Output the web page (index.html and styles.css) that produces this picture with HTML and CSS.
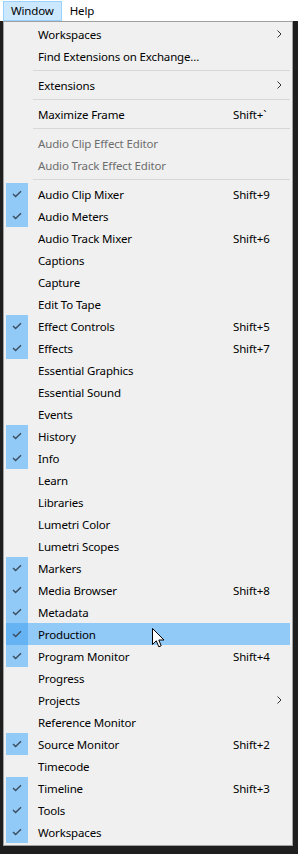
FILE: index.html
```html
<!DOCTYPE html>
<html lang="en">
<head>
    <meta charset="UTF-8">
    <meta name="viewport" content="width=device-width, initial-scale=1.0">
    <title>Window Menu</title>
    <link rel="stylesheet" href="styles.css">
</head>
<body>
    <div class="menubar">
        <div class="menubar-item active">Window</div>
        <div class="menubar-item">Help</div>
    </div>

    <div class="stage">
        <div class="menu">
            <div class="item"><span class="check"></span><span class="label">Workspaces</span><span class="key"></span><span class="arrow"><svg width="5" height="8" viewBox="0 0 5 8"><path d="M0.5 0.5 L4 4 L0.5 7.5" fill="none" stroke="#333" stroke-width="1"/></svg></span></div>
            <div class="item"><span class="check"></span><span class="label">Find Extensions on Exchange...</span><span class="key"></span><span class="arrow"></span></div>
            <div class="sep"></div>
            <div class="item"><span class="check"></span><span class="label">Extensions</span><span class="key"></span><span class="arrow"><svg width="5" height="8" viewBox="0 0 5 8"><path d="M0.5 0.5 L4 4 L0.5 7.5" fill="none" stroke="#333" stroke-width="1"/></svg></span></div>
            <div class="sep"></div>
            <div class="item"><span class="check"></span><span class="label">Maximize Frame</span><span class="key">Shift+`</span><span class="arrow"></span></div>
            <div class="sep"></div>
            <div class="item disabled"><span class="check"></span><span class="label">Audio Clip Effect Editor</span><span class="key"></span><span class="arrow"></span></div>
            <div class="item disabled"><span class="check"></span><span class="label">Audio Track Effect Editor</span><span class="key"></span><span class="arrow"></span></div>
            <div class="sep"></div>
            <div class="item checked"><span class="check"><svg width="10" height="8" viewBox="0 0 10 8"><path d="M1 4 L3.6 6.6 L9 1.2" fill="none" stroke="#3b4c5e" stroke-width="1.4"/></svg></span><span class="label">Audio Clip Mixer</span><span class="key">Shift+9</span><span class="arrow"></span></div>
            <div class="item checked"><span class="check"><svg width="10" height="8" viewBox="0 0 10 8"><path d="M1 4 L3.6 6.6 L9 1.2" fill="none" stroke="#3b4c5e" stroke-width="1.4"/></svg></span><span class="label">Audio Meters</span><span class="key"></span><span class="arrow"></span></div>
            <div class="item"><span class="check"></span><span class="label">Audio Track Mixer</span><span class="key">Shift+6</span><span class="arrow"></span></div>
            <div class="item"><span class="check"></span><span class="label">Captions</span><span class="key"></span><span class="arrow"></span></div>
            <div class="item"><span class="check"></span><span class="label">Capture</span><span class="key"></span><span class="arrow"></span></div>
            <div class="item"><span class="check"></span><span class="label">Edit To Tape</span><span class="key"></span><span class="arrow"></span></div>
            <div class="item checked"><span class="check"><svg width="10" height="8" viewBox="0 0 10 8"><path d="M1 4 L3.6 6.6 L9 1.2" fill="none" stroke="#3b4c5e" stroke-width="1.4"/></svg></span><span class="label">Effect Controls</span><span class="key">Shift+5</span><span class="arrow"></span></div>
            <div class="item checked"><span class="check"><svg width="10" height="8" viewBox="0 0 10 8"><path d="M1 4 L3.6 6.6 L9 1.2" fill="none" stroke="#3b4c5e" stroke-width="1.4"/></svg></span><span class="label">Effects</span><span class="key">Shift+7</span><span class="arrow"></span></div>
            <div class="item"><span class="check"></span><span class="label">Essential Graphics</span><span class="key"></span><span class="arrow"></span></div>
            <div class="item"><span class="check"></span><span class="label">Essential Sound</span><span class="key"></span><span class="arrow"></span></div>
            <div class="item"><span class="check"></span><span class="label">Events</span><span class="key"></span><span class="arrow"></span></div>
            <div class="item checked"><span class="check"><svg width="10" height="8" viewBox="0 0 10 8"><path d="M1 4 L3.6 6.6 L9 1.2" fill="none" stroke="#3b4c5e" stroke-width="1.4"/></svg></span><span class="label">History</span><span class="key"></span><span class="arrow"></span></div>
            <div class="item checked"><span class="check"><svg width="10" height="8" viewBox="0 0 10 8"><path d="M1 4 L3.6 6.6 L9 1.2" fill="none" stroke="#3b4c5e" stroke-width="1.4"/></svg></span><span class="label">Info</span><span class="key"></span><span class="arrow"></span></div>
            <div class="item"><span class="check"></span><span class="label">Learn</span><span class="key"></span><span class="arrow"></span></div>
            <div class="item"><span class="check"></span><span class="label">Libraries</span><span class="key"></span><span class="arrow"></span></div>
            <div class="item"><span class="check"></span><span class="label">Lumetri Color</span><span class="key"></span><span class="arrow"></span></div>
            <div class="item"><span class="check"></span><span class="label">Lumetri Scopes</span><span class="key"></span><span class="arrow"></span></div>
            <div class="item checked"><span class="check"><svg width="10" height="8" viewBox="0 0 10 8"><path d="M1 4 L3.6 6.6 L9 1.2" fill="none" stroke="#3b4c5e" stroke-width="1.4"/></svg></span><span class="label">Markers</span><span class="key"></span><span class="arrow"></span></div>
            <div class="item checked"><span class="check"><svg width="10" height="8" viewBox="0 0 10 8"><path d="M1 4 L3.6 6.6 L9 1.2" fill="none" stroke="#3b4c5e" stroke-width="1.4"/></svg></span><span class="label">Media Browser</span><span class="key">Shift+8</span><span class="arrow"></span></div>
            <div class="item checked"><span class="check"><svg width="10" height="8" viewBox="0 0 10 8"><path d="M1 4 L3.6 6.6 L9 1.2" fill="none" stroke="#3b4c5e" stroke-width="1.4"/></svg></span><span class="label">Metadata</span><span class="key"></span><span class="arrow"></span></div>
            <div class="item checked hover"><span class="check"><svg width="10" height="8" viewBox="0 0 10 8"><path d="M1 4 L3.6 6.6 L9 1.2" fill="none" stroke="#3b4c5e" stroke-width="1.4"/></svg></span><span class="label">Production</span><span class="key"></span><span class="arrow"></span></div>
            <div class="item checked"><span class="check"><svg width="10" height="8" viewBox="0 0 10 8"><path d="M1 4 L3.6 6.6 L9 1.2" fill="none" stroke="#3b4c5e" stroke-width="1.4"/></svg></span><span class="label">Program Monitor</span><span class="key">Shift+4</span><span class="arrow"></span></div>
            <div class="item"><span class="check"></span><span class="label">Progress</span><span class="key"></span><span class="arrow"></span></div>
            <div class="item"><span class="check"></span><span class="label">Projects</span><span class="key"></span><span class="arrow"><svg width="5" height="8" viewBox="0 0 5 8"><path d="M0.5 0.5 L4 4 L0.5 7.5" fill="none" stroke="#333" stroke-width="1"/></svg></span></div>
            <div class="item"><span class="check"></span><span class="label">Reference Monitor</span><span class="key"></span><span class="arrow"></span></div>
            <div class="item checked"><span class="check"><svg width="10" height="8" viewBox="0 0 10 8"><path d="M1 4 L3.6 6.6 L9 1.2" fill="none" stroke="#3b4c5e" stroke-width="1.4"/></svg></span><span class="label">Source Monitor</span><span class="key">Shift+2</span><span class="arrow"></span></div>
            <div class="item"><span class="check"></span><span class="label">Timecode</span><span class="key"></span><span class="arrow"></span></div>
            <div class="item checked"><span class="check"><svg width="10" height="8" viewBox="0 0 10 8"><path d="M1 4 L3.6 6.6 L9 1.2" fill="none" stroke="#3b4c5e" stroke-width="1.4"/></svg></span><span class="label">Timeline</span><span class="key">Shift+3</span><span class="arrow"></span></div>
            <div class="item checked"><span class="check"><svg width="10" height="8" viewBox="0 0 10 8"><path d="M1 4 L3.6 6.6 L9 1.2" fill="none" stroke="#3b4c5e" stroke-width="1.4"/></svg></span><span class="label">Tools</span><span class="key"></span><span class="arrow"></span></div>
            <div class="item checked"><span class="check"><svg width="10" height="8" viewBox="0 0 10 8"><path d="M1 4 L3.6 6.6 L9 1.2" fill="none" stroke="#3b4c5e" stroke-width="1.4"/></svg></span><span class="label">Workspaces</span><span class="key"></span><span class="arrow"></span></div>
        </div>

        <!-- mouse pointer over "Production" -->
        <svg class="cursor" width="13" height="21" viewBox="0 0 13 21">
            <path d="M0.5 0.5 L0.5 16.5 L4.3 12.8 L6.8 18.8 L9.2 17.8 L6.8 12 L12 12 Z" fill="#fff" stroke="#000" stroke-width="1" stroke-linejoin="miter"/>
        </svg>
    </div>
</body>
</html>
```

FILE: styles.css
```css
* {
    margin: 0;
    padding: 0;
    box-sizing: border-box;
}

body {
    font-family: "Noto Sans", "Segoe UI", sans-serif;
    font-size: 11.5px;
    letter-spacing: -0.15px;
    color: #000;
    background: #1b1b1b;
    width: 298px;
    height: 854px;
    overflow: hidden;
}

.menubar {
    display: flex;
    height: 21px;
    background: #fff;
    padding: 1px 0 0 3px;
}

.menubar-item {
    height: 20px;
    line-height: 18px;
    padding: 0 7px;
    border: 1px solid transparent;
}

.menubar-item.active {
    background: #cce8ff;
    border-color: #99d1ff;
}

.stage {
    position: relative;
    height: 833px;
    background: #1e1e1e;
}

.menu {
    margin-left: 3px;
    width: 290px;
    background: #f0f0f0;
    border: 1px solid #a0a0a0;
    padding: 1px 2px 2px 2px;
}

.item {
    display: grid;
    grid-template-columns: 22px 1fr 34px 22px;
    height: 22px;
    align-items: center;
}

.item .check {
    height: 22px;
    display: flex;
    align-items: center;
    justify-content: center;
}

.item.checked .check {
    background: #91c9f7;
}

.item.hover {
    background: #91c9f7;
}

.item.hover .check {
    background: #66b3f4;
}

.item .label {
    padding-left: 10px;
    white-space: nowrap;
}

.item .key {
    white-space: nowrap;
    margin-left: -1px;
}

.item .arrow {
    display: flex;
    align-items: center;
    padding-left: 9px;
}

.item.disabled {
    color: #6d6d6d;
}

.sep {
    height: 7px;
    padding-top: 3px;
    margin-left: 27px;
}

.sep::after {
    content: "";
    display: block;
    height: 1px;
    background: #d7d7d7;
}

.cursor {
    position: absolute;
    left: 152px;
    top: 607px;
}
```
